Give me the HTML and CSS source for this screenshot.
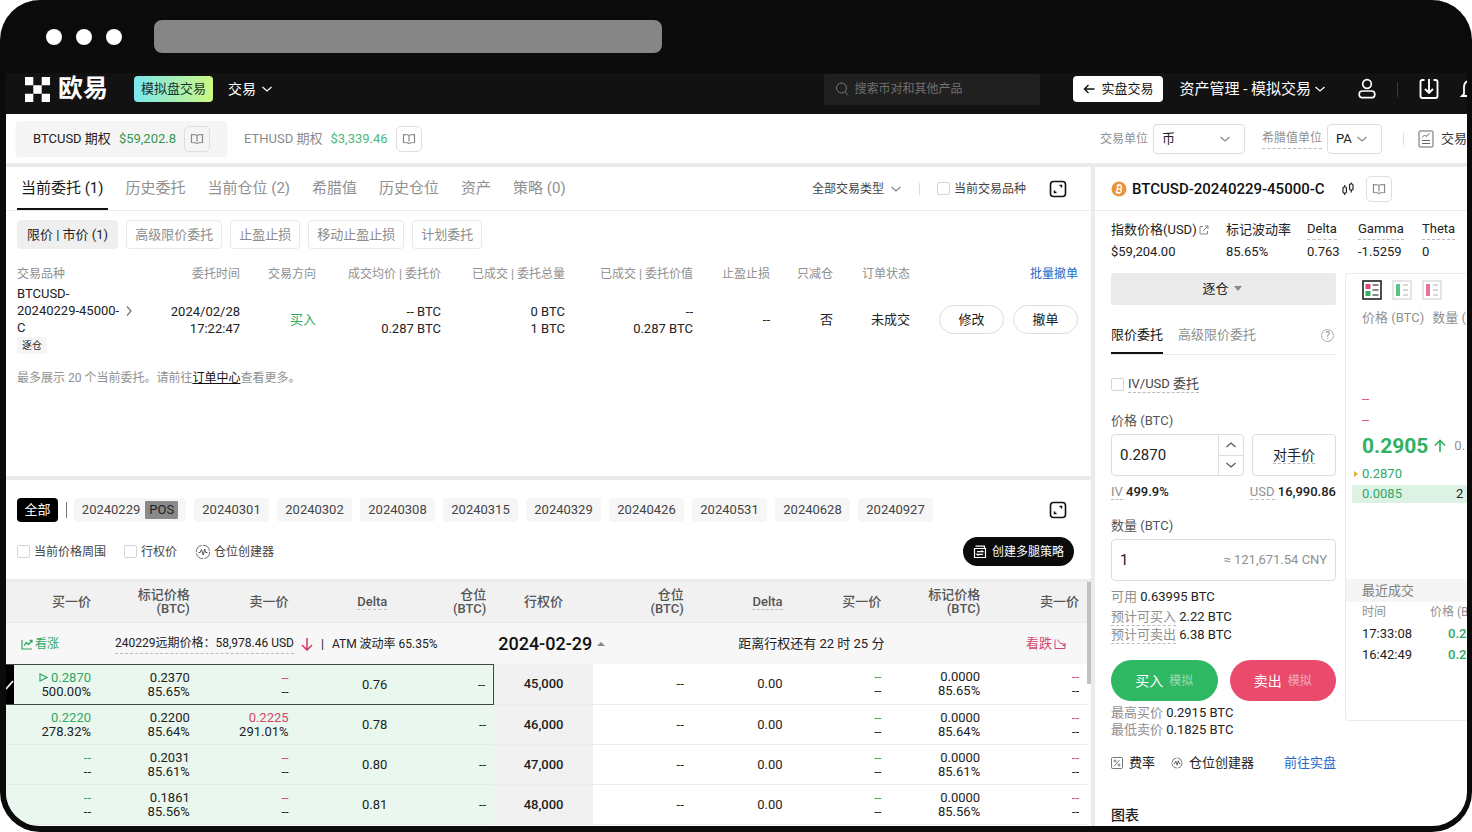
FILE: index.html
```html
<!DOCTYPE html>
<html lang="zh-CN">
<head>
<meta charset="utf-8">
<title>欧易 模拟交易</title>
<link rel="stylesheet" href="styles.css">
</head>
<body>
<svg class="defs" aria-hidden="true">
  <symbol id="chev" viewBox="0 0 12 12"><path d="M1.500 4 6 8l4.500-4" fill="none" stroke="currentColor" stroke-width="1.200"/></symbol>
  <symbol id="book" viewBox="0 0 14 12"><path d="M7 2.500C6 1.500 4 1.500 1.500 1.500v8C4 9.500 6 9.500 7 10.500 8 9.500 10 9.500 12.500 9.500v-8C10 1.500 8 1.500 7 2.500v6" fill="none" stroke="currentColor" stroke-width="1.200"/></symbol>
  <symbol id="expand" viewBox="0 0 18 18"><rect x="1.500" y="1.500" width="15" height="15" rx="3" fill="none" stroke="currentColor" stroke-width="1.600"/><path d="M10.500 5.500h2v2M5.500 10.500v2h2" fill="none" stroke="currentColor" stroke-width="1.500"/></symbol>
  <symbol id="pulse" viewBox="0 0 16 16"><circle cx="8" cy="8" r="6.700" fill="none" stroke="currentColor" stroke-width=".8" stroke-dasharray="9 1.500"/><path d="M3.500 8.500h1.700l1.300-3 1.700 5.500 1.500-6 1 3.500h1.800" fill="none" stroke="currentColor" stroke-width=".9"/></symbol>
</svg>
<div class="window">
  <div class="chrome"><i class="dot"></i><i class="dot"></i><i class="dot"></i><div class="address"></div></div>

  <header class="nav">
    <svg class="logo" viewBox="0 0 25 25" fill="#fff"><path d="M0 0h8.300v8.300H0zM16.700 0H25v8.300h-8.300zM8.300 8.300h8.400v8.400H8.300zM0 16.700h8.300V25H0zM16.700 16.700H25V25h-8.300z"/></svg>
    <span class="brand">欧易</span>
    <span class="demo">模拟盘交易</span>
    <button class="nav-link trade">交易<svg class="i12"><use href="#chev"/></svg></button>
    <label class="search"><svg class="i14" viewBox="0 0 14 14" fill="none" stroke="currentColor"><circle cx="6.500" cy="6" r="5"/><path d="m10 10 3 3.300"/></svg><input type="text" placeholder="搜索币对和其他产品" aria-label="搜索"></label>
    <button class="live"><svg class="i12" viewBox="0 0 12 12" fill="none" stroke="currentColor" stroke-width="1.400"><path d="M11.500 6H1.500M5.500 2l-4 4 4 4"/></svg>实盘交易</button>
    <button class="nav-link assets">资产管理 - 模拟交易<svg class="i12"><use href="#chev"/></svg></button>
    <button class="icon-btn user" aria-label="账户"><svg width="20" height="22" viewBox="0 0 20 22" fill="none" stroke="#fff" stroke-width="1.700"><circle cx="10" cy="6" r="4.300"/><path d="M5.500 13h9q3.300 0 3.300 3.300t-2.500 3.300H4.700q-2.500 0-2.500-3.300T5.500 13z"/></svg></button>
    <i class="nav-sep"></i>
    <button class="icon-btn" aria-label="下载"><svg width="20" height="22" viewBox="0 0 20 22" fill="none" stroke="#fff" stroke-width="1.900"><path d="M5.500 2H3.500Q1.500 2 1.500 4v14q0 2 2 2h13q2 0 2-2V4q0-2-2-2h-2M10 1v14M6 11l4 4 4-4"/></svg></button>
    <button class="icon-btn bell" aria-label="通知"><svg width="20" height="22" viewBox="0 0 20 22" fill="none" stroke="#fff" stroke-width="1.800"><path d="M4 16V9q0-6 6-6t6 6v7l2 2H2z"/></svg></button>
  </header>

  <div class="pairs">
    <div class="pair active"><span>BTCUSD 期权</span><b class="up">$59,202.8</b><button class="book" aria-label="说明"><svg width="14" height="12"><use href="#book"/></svg></button></div>
    <div class="pair"><span>ETHUSD 期权</span><b class="up">$3,339.46</b><button class="book" aria-label="说明"><svg width="14" height="12"><use href="#book"/></svg></button></div>
    <div class="units">
      <label for="unit">交易单位</label>
      <span class="sel unit"><select id="unit"><option>币</option></select><svg class="i12"><use href="#chev"/></svg></span>
      <label for="greek" class="dash greek">希腊值单位</label>
      <span class="sel pa"><select id="greek"><option>PA</option></select><svg class="i12"><use href="#chev"/></svg></span>
      <i class="sep"></i>
      <button class="data"><svg width="16" height="18" viewBox="0 0 16 18" fill="none" stroke="#666"><rect x="1" y="1" width="14" height="16" rx="1"/><path d="M4 13.500h8M4 10.500h8M4 7.500l2.500-2.500 1.500 1.500L11.500 3.500"/></svg>交易</button>
    </div>
  </div>

  <main class="main">
    <div class="left">
      <section class="orders">
        <nav class="tabs">
          <button class="tab on">当前委托 (1)</button><button class="tab">历史委托</button><button class="tab">当前仓位 (2)</button><button class="tab">希腊值</button><button class="tab">历史仓位</button><button class="tab">资产</button><button class="tab">策略 (0)</button>
          <button class="type">全部交易类型<svg class="i12"><use href="#chev"/></svg></button>
          <i class="sep"></i>
          <label class="check only"><input type="checkbox">当前交易品种</label>
          <button class="expand" aria-label="展开"><svg width="18" height="18"><use href="#expand"/></svg></button>
        </nav>
        <div class="filters"><button class="on">限价 | 市价 (1)</button><button>高级限价委托</button><button>止盈止损</button><button>移动止盈止损</button><button>计划委托</button></div>
        <table class="otable">
          <colgroup><col class="o1"><col class="o2"><col class="o3"><col class="o4"><col class="o5"><col class="o6"><col class="o7"><col class="o8"><col class="o9"><col class="o10"></colgroup>
          <thead><tr><th>交易品种</th><th>委托时间</th><th>交易方向</th><th>成交均价 | 委托价</th><th>已成交 | 委托总量</th><th>已成交 | 委托价值</th><th>止盈止损</th><th>只减仓</th><th>订单状态</th><th><a href="#">批量撤单</a></th></tr></thead>
          <tbody><tr>
            <td><div class="sym"><span>BTCUSD-<br>20240229-45000-<br>C</span><svg class="i12 right"><use href="#chev"/></svg></div><span class="tag">逐仓</span></td>
            <td>2024/02/28<br>17:22:47</td><td class="up">买入</td><td>-- BTC<br>0.287 BTC</td><td>0 BTC<br>1 BTC</td><td>--<br>0.287 BTC</td><td>--</td><td>否</td><td>未成交</td>
            <td><div class="acts"><button>修改</button><button>撤单</button></div></td>
          </tr></tbody>
        </table>
        <p class="note">最多展示 20 个当前委托。请前往<a href="#">订单中心</a>查看更多。</p>
      </section>

      <section class="chain">
        <div class="dates">
          <button class="all">全部</button><i class="bar"></i>
          <button class="pos">20240229 <em>POS</em></button><button>20240301</button><button>20240302</button><button>20240308</button><button>20240315</button><button>20240329</button><button>20240426</button><button>20240531</button><button>20240628</button><button>20240927</button>
          <button class="expand" aria-label="展开"><svg width="18" height="18"><use href="#expand"/></svg></button>
        </div>
        <div class="opts">
          <label class="check"><input type="checkbox">当前价格周围</label>
          <label class="check"><input type="checkbox">行权价</label>
          <button class="builder"><svg class="i16"><use href="#pulse"/></svg>仓位创建器</button>
          <button class="create"><svg class="i14" viewBox="0 0 14 14" fill="none" stroke="#fff" stroke-width="1.200"><path d="M1.500 3.500h11v9h-11zM2.500 1.200h9v2.300M4 6.700h6L8.500 5.500M10 9.300H4l1.500 1.200"/></svg>创建多腿策略</button>
        </div>
        <div class="scroll">
        <table class="ctable">
          <colgroup><col class="first"><col><col><col><col><col><col><col><col><col><col></colgroup>
          <thead><tr><th>买一价</th><th>标记价格<br>(BTC)</th><th>卖一价</th><th><span class="dash">Delta</span></th><th>仓位<br>(BTC)</th><th class="mid">行权价</th><th>仓位<br>(BTC)</th><th><span class="dash">Delta</span></th><th>买一价</th><th>标记价格<br>(BTC)</th><th>卖一价</th></tr></thead>
          <tbody>
          <tr class="group">
            <td colspan="5"><div class="gl"><span class="call"><svg class="i12" viewBox="0 0 12 12" fill="none" stroke="currentColor" stroke-width="1.200"><path d="M1 2v9h10M3 7.500l2.500-3 2 2L11 2.500M8.500 2.300H11v2.500"/></svg>看涨</span><span class="dash fwd">240229远期价格：58,978.46 USD</span><svg class="arrow-down" width="12" height="14" viewBox="0 0 12 14" fill="none" stroke="#d3365f" stroke-width="1.500"><path d="M6 1v12M1 8l5 5 5-5"/></svg><span class="pipe">|</span><span>ATM 波动率 65.35%</span></div></td>
            <td colspan="6"><div class="gr"><strong>2024-02-29</strong><i class="tri-up"></i><span class="left-time">距离行权还有 22 时 25 分</span><span class="put">看跌<svg class="i12" viewBox="0 0 12 12" fill="none" stroke="currentColor"><path d="M1 1.500v9h10V7L8 5.500 6.500 5.500 3.500 1.500M8.500 7.500H11V5"/></svg></span></div></td>
          </tr>
          <tr class="sel-row"><td><i class="mark"><svg width="8" height="12" viewBox="0 0 8 12" fill="none" stroke="#fff" stroke-width="1.600"><path d="M0 10 7 2"/></svg></i><span class="up"><svg class="play" width="9" height="9" viewBox="0 0 9 9" fill="none" stroke="currentColor" stroke-width="1.200"><path d="M1 1v7l7-3.500z"/></svg> 0.2870</span><br>500.00%</td><td>0.2370<br>85.65%</td><td><span class="down">--</span><br>--</td><td>0.76</td><td>--</td><td class="mid">45,000</td><td>--</td><td>0.00</td><td><span class="up">--</span><br>--</td><td>0.0000<br>85.65%</td><td><span class="down">--</span><br>--</td></tr>
          <tr><td><span class="up">0.2220</span><br>278.32%</td><td>0.2200<br>85.64%</td><td><span class="down">0.2225</span><br>291.01%</td><td>0.78</td><td>--</td><td class="mid">46,000</td><td>--</td><td>0.00</td><td><span class="up">--</span><br>--</td><td>0.0000<br>85.64%</td><td><span class="down">--</span><br>--</td></tr>
          <tr><td><span class="up">--</span><br>--</td><td>0.2031<br>85.61%</td><td><span class="down">--</span><br>--</td><td>0.80</td><td>--</td><td class="mid">47,000</td><td>--</td><td>0.00</td><td><span class="up">--</span><br>--</td><td>0.0000<br>85.61%</td><td><span class="down">--</span><br>--</td></tr>
          <tr><td><span class="up">--</span><br>--</td><td>0.1861<br>85.56%</td><td><span class="down">--</span><br>--</td><td>0.81</td><td>--</td><td class="mid">48,000</td><td>--</td><td>0.00</td><td><span class="up">--</span><br>--</td><td>0.0000<br>85.56%</td><td><span class="down">--</span><br>--</td></tr>
          </tbody>
        </table>
        <div class="track"><i></i></div>
        </div>
      </section>
    </div>

    <aside class="side">
      <div class="inst">
        <svg class="i16" viewBox="0 0 16 16"><circle cx="8" cy="8" r="7.500" fill="#e8943d"/><g transform="rotate(12 8 8)" fill="none" stroke="#fff" stroke-width="1.300"><path d="M6.200 4.500h2.300q1.700 0 1.700 1.700T8.500 8H6.200zM6.200 8h2.600q1.800 0 1.800 1.800T8.800 11.500H6.200zM5 4.500h1.500M5 11.500h1.500M7 3v1.500M8.800 3v1.500M7 11.500V13M8.800 11.500V13"/></g></svg>
        <h2>BTCUSD-20240229-45000-C</h2>
        <svg class="candles" width="12" height="14" viewBox="0 0 12 14" fill="none" stroke="#222" stroke-width="1.200"><rect x="1" y="5" width="3.400" height="6" rx="1"/><rect x="7.600" y="2" width="3.400" height="6" rx="1"/><path d="M2.700 3v2M2.700 11v2M9.300.5V2M9.300 8v2.500"/></svg>
        <button class="book" aria-label="说明"><svg width="14" height="12"><use href="#book"/></svg></button>
      </div>
      <dl class="stats">
        <div><dt>指数价格(USD)<svg width="10" height="10" viewBox="0 0 10 10" fill="none" stroke="#888"><path d="M4 1.500H1v7.500h7.500V6M4.500 5.500 9 1M6 1h3v3"/></svg></dt><dd>$59,204.00</dd></div>
        <div><dt>标记波动率</dt><dd>85.65%</dd></div>
        <div><dt><span class="dash">Delta</span></dt><dd>0.763</dd></div>
        <div><dt><span class="dash">Gamma</span></dt><dd>-1.5259</dd></div>
        <div><dt><span class="dash">Theta</span></dt><dd>0</dd></div>
      </dl>
      <div class="cols">
        <form class="form">
          <div class="mode"><select aria-label="保证金模式"><option>逐仓</option></select><i class="tri-down"></i></div>
          <div class="ftabs"><button type="button" class="on">限价委托</button><button type="button">高级限价委托</button><button type="button" class="help" aria-label="帮助">?</button></div>
          <label class="check iv"><input type="checkbox"><span class="dash">IV/USD 委托</span></label>
          <label class="flabel" for="price">价格 (BTC)</label>
          <div class="price-row">
            <div class="box"><input id="price" type="text" value="0.2870"><div class="steps"><button type="button" aria-label="加"><svg class="i12 flip"><use href="#chev"/></svg></button><button type="button" aria-label="减"><svg class="i12"><use href="#chev"/></svg></button></div></div>
            <button type="button" class="rival"><span class="dash">对手价</span></button>
          </div>
          <div class="ivrow"><span><span class="dash mute">IV</span> <b>499.9%</b></span><span><span class="dash mute">USD</span> <b>16,990.86</b></span></div>
          <label class="flabel" for="qty">数量 (BTC)</label>
          <div class="box qty"><input id="qty" type="text" value="1"><span class="mute">≈ 121,671.54 CNY</span></div>
          <div class="avail"><span class="mute">可用</span> 0.63995 BTC</div>
          <div class="est"><span class="mute dash">预计可买入</span> 2.22 BTC</div>
          <div class="est"><span class="mute dash">预计可卖出</span> 6.38 BTC</div>
          <div class="trade-btns"><button type="button" class="buy">买入<small>模拟</small></button><button type="button" class="sell">卖出<small>模拟</small></button></div>
          <div class="lim"><span class="mute">最高买价</span> 0.2915 BTC</div>
          <div class="lim"><span class="mute">最低卖价</span> 0.1825 BTC</div>
          <div class="links"><button type="button"><svg class="i12" viewBox="0 0 12 12" fill="none" stroke="#777"><rect x=".5" y=".5" width="11" height="11" rx="1"/><path d="m3.500 9 5-6"/><circle cx="4" cy="4" r="1"/><circle cx="8" cy="8" r="1"/></svg>费率</button><button type="button"><svg class="i12"><use href="#pulse"/></svg>仓位创建器</button><a href="#">前往实盘</a></div>
          <h3>图表</h3>
        </form>

        <section class="bookpanel">
          <div class="modes">
            <button aria-label="全部"><svg width="20" height="20" viewBox="0 0 20 20"><rect x="1" y="1" width="18" height="18" fill="#fff" stroke="#222" stroke-width="1.600"/><path fill="#dc4a73" d="M3.500 4h5v5h-5z"/><path fill="#31b263" d="M3.500 11h5v5h-5z"/><path d="M10.500 5h6M10.500 10h6M10.500 15h6" stroke="#888" stroke-width="2"/></svg></button>
            <button aria-label="买盘"><svg width="20" height="20" viewBox="0 0 20 20"><rect x="1" y="1" width="18" height="18" fill="#fff" stroke="#ddd" stroke-width="1.500"/><path fill="#58c688" d="M4 4h4v12H4z"/><path d="M11 5h5M11 10h5M11 15h5" stroke="#ccc" stroke-width="1.500"/></svg></button>
            <button aria-label="卖盘"><svg width="20" height="20" viewBox="0 0 20 20"><rect x="1" y="1" width="18" height="18" fill="#fff" stroke="#ddd" stroke-width="1.500"/><path fill="#e3759a" d="M4 4h4v12H4z"/><path d="M11 5h5M11 10h5M11 15h5" stroke="#ccc" stroke-width="1.500"/></svg></button>
          </div>
          <div class="bhead"><span>价格 (BTC)</span><span>数量 (</span></div>
          <div class="asks down"><div>--</div><div>--</div></div>
          <div class="last"><strong>0.2905</strong><svg width="12" height="14" viewBox="0 0 12 14" fill="none" stroke="currentColor" stroke-width="1.700"><path d="M6 13V1.500M1 6.500l5-5 5 5"/></svg><span>0.</span></div>
          <div class="bid mine"><span class="up">0.2870</span></div>
          <div class="bid hi"><span class="up">0.0085</span><span>2</span></div>
          <h4>最近成交</h4>
          <div class="trow head"><span>时间</span><span>价格 (B</span></div>
          <div class="trow"><span>17:33:08</span><b class="up">0.2</b></div>
          <div class="trow"><span>16:42:49</span><b class="up">0.2</b></div>
        </section>
      </div>
    </aside>
  </main>
</div>
</body>
</html>
```
FILE: styles.css
```css
* { box-sizing: border-box; }
body { margin: 0; background: #fff; color: #222; font: 13px/16px Roboto, "Noto Sans CJK SC", sans-serif; overflow: hidden; }
button, input, select { font: inherit; color: inherit; margin: 0; }
button { background: none; border: 0; padding: 0; white-space: nowrap; display: inline-flex; align-items: center; justify-content: center; }
svg { flex: none; }
h2, h3, h4, p, dl, dd { margin: 0; }
table { border-spacing: 0; table-layout: fixed; width: 100%; }
th { font-weight: 400; }
.defs { position: absolute; width: 0; height: 0; }
.i12 { width: 12px; height: 12px; }
.i14 { width: 14px; height: 14px; }
.i16 { width: 16px; height: 16px; }
.flip { transform: rotate(180deg); }
.right { transform: rotate(-90deg); color: #777; }
.up { color: #31a864; }
.down { color: #d3466a; }
.mute { color: #909090; }
.dash { border-bottom: 1px dashed #bbb; }
.sep { width: 1px; height: 12px; background: #ddd; }

.window { height: 100vh; display: flex; flex-direction: column; overflow: hidden; background: #0b0b0b; border: solid #0b0b0b; border-width: 0 5px 6px 6px; border-radius: 40px; }
.chrome { flex: none; height: 73px; display: flex; align-items: center; gap: 14px; padding-left: 40px; }
.dot { width: 16px; height: 16px; border-radius: 50%; background: #fff; }
.address { width: 508px; height: 33px; border-radius: 8px; background: #868686; margin-left: 18px; }

.nav { flex: none; height: 41px; background: #121212; color: #fff; display: flex; align-items: center; padding: 0 0 9px 19px; }
.logo { width: 25px; height: 25px; }
.brand { font-size: 25px; line-height: 28px; font-weight: 700; margin-left: 8px; }
.demo { margin-left: 26px; height: 26px; padding: 0 7px; border-radius: 4px; background: linear-gradient(90deg, #7ce7ee, #cdf782); color: #16302c; line-height: 26px; }
.nav-link { gap: 5px; }
.trade { margin-left: 15px; font-size: 14px; }
.search { margin-left: auto; width: 216px; height: 31px; background: #202020; border-radius: 2px; display: flex; align-items: center; gap: 5px; padding-left: 11px; color: #777; font-size: 12px; }
.search input { background: none; border: 0; padding: 0; width: 170px; outline: 0; }
.search input::placeholder { color: #707070; }
.live { margin-left: 33px; height: 26px; width: 90px; background: #fff; color: #111; border-radius: 4px; gap: 6px; }
.assets { margin-left: 16px; font-size: 15px; gap: 3px; }
.icon-btn.user { margin-left: 31px; }
.nav-sep { width: 1px; height: 15px; background: #3a3a3a; margin: 0 21px 0 20px; }
.bell { margin: 0 -13px 0 21px; }

.pairs { flex: none; height: 53px; background: #fff; border-bottom: 4px solid #ebebeb; display: flex; align-items: center; padding-left: 10px; }
.pair { display: flex; align-items: center; gap: 8px; padding: 0 17px; height: 35px; color: #8c8c8c; border-radius: 4px; white-space: nowrap; }
.pair b { font-weight: 400; }
.pair .up { color: #4fb97a; }
.pair.active { background: #f5f5f5; color: #222; box-shadow: 0 1px 2px #eee; }
.pair.active .up { color: #31984f; }
.book { width: 26px; height: 26px; border: 1px solid #dedede; border-radius: 5px; color: #888; }
.units { margin-left: auto; display: flex; align-items: center; white-space: nowrap; color: #909090; }
.units label { font-size: 12px; }
.sel { position: relative; height: 30px; color: #222; margin-left: 5px; }
.sel select { appearance: none; width: 100%; height: 30px; border: 1px solid #ddd; border-radius: 4px; background: #fff; padding: 0 8px; }
.sel svg { position: absolute; right: 14px; top: 9px; color: #888; pointer-events: none; }
.unit { width: 92px; }
.pa { width: 55px; }
.greek { margin-left: 17px; line-height: 20px; }
.units .sep { margin: 0 14px 0 21px; }
.data { gap: 7px; color: #333; }

.main { flex: 1; min-height: 0; display: flex; background: #fff; }
.left { flex: 1; min-width: 0; display: flex; flex-direction: column; border-right: 4px solid #ebebeb; }
.orders { flex: none; height: 313px; border-bottom: 4px solid #ebebeb; }
.tabs { height: 44px; border-bottom: 1px solid #ebebeb; display: flex; align-items: center; padding: 0 24px 0 11px; }
.tab { font-size: 15px; color: #909090; height: 43px; padding: 0 4px; margin-right: 14px; border-bottom: 2px solid transparent; }
.tab.on { color: #1a1a1a; border-color: #111; }
.type { margin-left: auto; gap: 6px; color: #444; font-size: 12px; }
.type svg { color: #888; }
.tabs .sep { margin: 0 17px; }
.check { display: inline-flex; align-items: center; gap: 4px; color: #444; white-space: nowrap; }
.check input { appearance: none; width: 13px; height: 13px; border: 1px solid #d5d5d5; border-radius: 2px; background: #fff; }
.only { margin-right: 23px; font-size: 12px; }
.expand { color: #111; }
.filters { display: flex; gap: 8px; padding: 9px 11px 0; }
.filters button { height: 29px; padding: 0 8px; border: 1px solid #eaeaea; border-radius: 4px; color: #8c8c8c; }
.filters .on { background: #efefef; color: #222; border-color: #efefef; padding: 0 9px; }
.otable { margin: 13px 13px 0 11px; width: calc(100% - 24px); }
.otable th { height: 23px; padding: 0; text-align: right; color: #909090; white-space: nowrap; font-size: 12px; }
.otable td { padding: 0; text-align: right; line-height: 17px; }
.otable th:first-child, .otable td:first-child { text-align: left; }
.otable a { color: #2468c8; text-decoration: none; }
.o1 { width: 123px; } .o2 { width: 100px; } .o3 { width: 76px; } .o4 { width: 125px; } .o5 { width: 124px; } .o6 { width: 128px; } .o7 { width: 77px; } .o8 { width: 63px; } .o9 { width: 77px; } .o10 { width: 168px; }
.sym { display: flex; align-items: center; white-space: nowrap; gap: 4px; }
.tag { display: inline-block; font-size: 10px; background: #f5f5f5; padding: 0 5px; border-radius: 2px; }
.acts { display: flex; justify-content: flex-end; gap: 9px; }
.acts button { width: 65px; height: 29px; border: 1px solid #ddd; border-radius: 15px; }
.note { margin: 16px 11px 0; color: #909090; font-size: 12px; }
.note a { color: #111; }

.chain { flex: 1; min-height: 0; }
.dates { display: flex; align-items: center; gap: 8px; padding: 18px 24px 0 11px; }
.dates button { width: 75px; height: 24px; background: #f6f6f6; border-radius: 4px; color: #444; }
.dates .all { width: 41px; background: #000; color: #fff; }
.dates .bar { width: 1px; height: 16px; background: #777; margin-right: -1px; }
.dates .pos { width: 112px; gap: 5px; }
.pos em { font-style: normal; background: #8a8a8a; color: #222; padding: 1px 4px; border-radius: 1px; }
.dates .expand { width: 18px; height: 18px; background: none; margin-left: auto; color: #111; }
.opts { display: flex; align-items: center; gap: 18px; padding: 15px 17px 13px 11px; font-size: 12px; }
.builder { gap: 3px; color: #444; }
.create { margin-left: auto; height: 29px; width: 111px; border-radius: 15px; background: #0b0b0b; color: #fff; gap: 5px; }
.scroll { display: flex; border-top: 3px solid #ebebeb; }
.track { width: 4px; }
.track i { display: block; height: 102px; background: #c2c2c2; }
.ctable { flex: 1; }
.ctable .first { width: 93px; }
.ctable th { height: 41px; padding: 0 8px 0 0; background: #f1f1f1; color: #555; font-weight: 500; line-height: 14px; text-align: right; border-bottom: 1px solid #ebebeb; }
.ctable td { height: 40px; padding: 0 8px 0 0; text-align: right; line-height: 14px; border-bottom: 1px solid #ececec; }
.ctable td:nth-child(-n+5) { background: #e9f7ee; border-color: #e0eee5; }
.ctable .mid { text-align: center; padding: 0; }
.ctable td.mid { background: #f1f1f1; font-weight: 500; }
.ctable .group td { background: #f7f7f7; height: 41px; border: 0; padding: 0; }
.ctable .sel-row td { height: 41px; }
.ctable .sel-row td:nth-child(-n+5) { border-top: 1px solid #444; border-bottom: 1px solid #444; }
.ctable .sel-row td:nth-child(5) { border-right: 1px solid #444; }
.sel-row td:first-child { position: relative; }
.mark { position: absolute; left: 0; top: 0; bottom: 0; width: 8px; background: #000; display: flex; align-items: center; }
.gl, .gr { display: flex; align-items: center; white-space: nowrap; }
.gl { padding-left: 15px; font-size: 12px; }
.call { color: #31a864; display: flex; align-items: center; gap: 2px; width: 94px; }
.put { color: #d3466a; display: flex; align-items: center; gap: 2px; margin: 0 21px 0 auto; }
.fwd { line-height: 20px; }
.arrow-down { margin-left: 7px; }
.pipe { margin: 0 8px; }
.gr { padding-left: 4px; }
.gr strong { font-size: 18px; font-weight: 500; color: #111; }
.tri-up { border: 4px solid transparent; border-top: 0; border-bottom-color: #888; margin-left: 5px; }
.left-time { margin-left: 133px; }

.side { width: 372px; flex: none; overflow: hidden; }
.inst { height: 44px; border-bottom: 1px solid #ebebeb; display: flex; align-items: center; padding-left: 16px; }
.inst h2 { font-size: 15px; font-weight: 500; margin-left: 5px; white-space: nowrap; color: #111; }
.candles { margin: 0 12px 0 17px; }
.stats { display: grid; grid-template-columns: 115px 81px 51px 64px 45px; padding: 6px 0 0 16px; white-space: nowrap; }
.stats dt { line-height: 20px; height: 25px; display: flex; align-items: center; gap: 2px; }
.stats dd { line-height: 20px; }
.cols { display: flex; align-items: flex-start; padding: 11px 0 0 16px; gap: 9px; }
.form { width: 225px; flex: none; display: flex; flex-direction: column; }
.mode { position: relative; }
.mode select { appearance: none; display: block; width: 100%; height: 32px; border: 0; border-radius: 2px; background: #ebebeb; text-align: center; text-align-last: center; padding: 0 16px 0 0; }
.tri-down { position: absolute; left: 123px; top: 13px; border: 4px solid transparent; border-bottom: 0; border-top: 5px solid #888; }
.ftabs { display: flex; gap: 15px; height: 50px; border-bottom: 1px solid #ebebeb; margin-bottom: 18px; }
.ftabs button { padding-top: 12px; color: #909090; border-bottom: 2px solid transparent; }
.ftabs .on { color: #111; border-color: #111; }
.ftabs .help { width: 13px; height: 13px; border: 1px solid #aaa; border-radius: 50%; font-size: 10px; padding: 0; margin: 24px 2px 0 auto; }
.iv { height: 22px; }
.flabel { line-height: 20px; color: #555; margin: 16px 0 3px; }
.price-row { display: flex; gap: 8px; height: 42px; }
.box { border: 1px solid #ddd; border-radius: 4px; display: flex; align-items: center; flex: 1; height: 42px; }
.box input { border: 0; outline: 0; padding: 0 0 0 8px; flex: 1; width: 40px; background: none; font-size: 15px; }
.steps { width: 25px; border-left: 1px solid #ddd; align-self: stretch; display: grid; color: #555; }
.steps button + button { border-top: 1px solid #ddd; }
.rival { width: 84px; border: 1px solid #ddd; border-radius: 4px; font-size: 14px; }
.ivrow { display: flex; justify-content: space-between; margin-top: 8px; }
.ivrow b { font-weight: 500; }
.qty { padding-right: 8px; flex: none; }
.avail { margin-top: 7px; line-height: 18px; margin-bottom: 2px; }
.est { line-height: 17px; }
.est .dash { display: inline-block; line-height: 16px; }
.trade-btns { display: flex; gap: 12px; margin: 16px 0 3px; }
.trade-btns button { flex: 1; height: 41px; border-radius: 21px; color: #fff; font-size: 14px; gap: 6px; }
.trade-btns small { font-size: 12px; opacity: .5; }
.buy { background: #2fb864; }
.sell { background: #ea4a6c; }
.lim { line-height: 17px; }
.links { display: flex; gap: 16px; margin-top: 17px; height: 16px; }
.links button { gap: 6px; }
.links a { color: #2468c8; text-decoration: none; margin-left: auto; white-space: nowrap; }
.form h3 { font-size: 14px; font-weight: 500; margin-top: 34px; line-height: 20px; }

.bookpanel { flex: 1; height: 448px; border: 1px solid #ebebeb; border-right: 0; border-radius: 3px 0 0 3px; white-space: nowrap; }
.modes { display: flex; gap: 10px; padding: 6px 0 0 16px; }
.bhead { display: flex; gap: 8px; padding: 8px 0 8px 16px; color: #909090; line-height: 20px; }
.asks { margin: 52px 0 0 16px; line-height: 21px; }
.last { display: flex; align-items: center; color: #31b263; padding: 4px 0 7px 16px; line-height: 24px; gap: 6px; }
.last strong { font-size: 21px; font-weight: 700; }
.last span { color: #909090; margin-left: 2px; }
.bid { margin-left: 6px; padding-left: 10px; line-height: 18px; display: flex; }
.mine { margin-bottom: 2px; align-items: center; }
.mine::before { content: ""; border: 3px solid transparent; border-left: 4px solid #e0b030; border-right: 0; margin: 0 4px 0 -8px; }
.hi { background: #def1e5; }
.hi span + span { margin-left: 54px; }
.bookpanel h4 { margin-top: 76px; background: #f5f5f5; font-weight: 400; color: #808080; padding-left: 16px; line-height: 23px; }
.trow { display: flex; padding-left: 16px; line-height: 21px; }
.trow > :first-child { width: 86px; }
.trow b { font-weight: 500; }
.trow.head { color: #909090; font-size: 12px; }
.trow.head > :first-child { width: 68px; }
```
